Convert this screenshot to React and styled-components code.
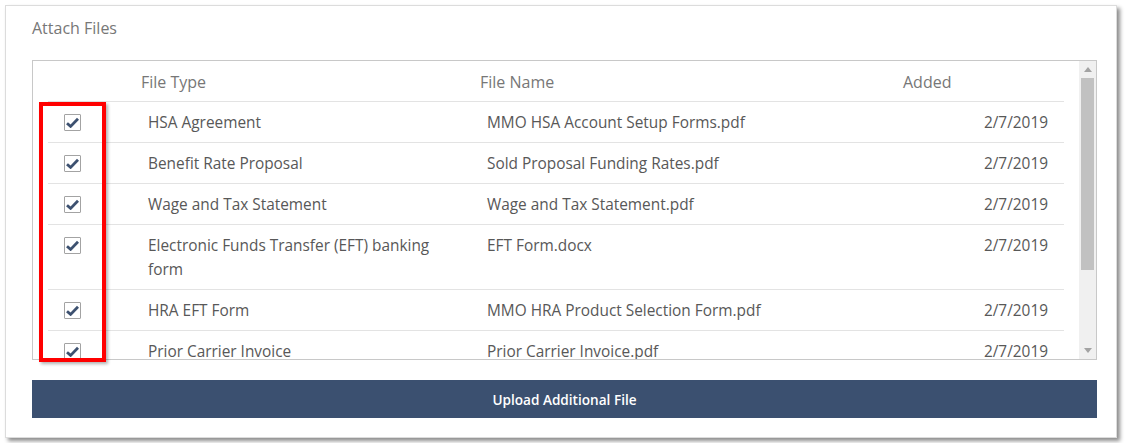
import React from "react";
import styled, { createGlobalStyle } from "styled-components";

const GlobalStyle = createGlobalStyle`
  html, body {
    margin: 0;
    padding: 0;
    background: #fff;
  }
  body {
    font-family: "Open Sans", "Liberation Sans", Arial, sans-serif;
  }
  * {
    box-sizing: border-box;
  }
`;

const Page = styled.div`
  padding: 5px;
`;

const Card = styled.div`
  width: 1112px;
  height: 433px;
  background: #fff;
  border: 1px solid #dcdcdc;
  box-shadow: 3px 3px 4px rgba(0, 0, 0, 0.45);
  padding: 10px 19px 19px 26px;
  display: flex;
  flex-direction: column;
`;

const Title = styled.div`
  font-size: 16px;
  line-height: 24px;
  color: #777;
  margin-bottom: 20px;
`;

const TableBox = styled.div`
  position: relative;
  height: 300px;
  border: 1px solid #c8c8c8;
  display: flex;
`;

const TableInner = styled.div`
  flex: 1;
  overflow: hidden;
  padding: 0 15px;
`;

const Row = styled.div`
  display: grid;
  grid-template-columns: 93px 339px 423px 161px;
  border-bottom: 1px solid #e3e3e3;
  font-size: ${(p) => (p.$head ? "16px" : "15.4px")};
  line-height: 24px;
  color: ${(p) => (p.$head ? "#777" : "#585858")};
`;

const Cell = styled.div`
  padding: ${(p) => (p.$head ? "9px" : "9px")}
    ${(p) => (p.$right ? "16px" : "30px")} ${(p) => (p.$head ? "7px" : "7px")}
    ${(p) => (p.$head ? "0" : "7px")};
  text-align: ${(p) => (p.$right ? "right" : "left")};
`;

const CheckCell = styled.div`
  padding: 12px 0 0 16px;
`;

const CheckBox = styled.div`
  width: 17px;
  height: 17px;
  border: 1px solid #a3a3a3;
  border-radius: 1px;
  background: #fff;
  display: flex;
  align-items: center;
  justify-content: center;
`;

const Scrollbar = styled.div`
  width: 17px;
  background: #f0f0f0;
  display: flex;
  flex-direction: column;
`;

const ArrowBtn = styled.div`
  height: 17px;
  display: flex;
  align-items: center;
  justify-content: center;
`;

const Track = styled.div`
  flex: 1;
  padding: 0 2px;
`;

const Thumb = styled.div`
  height: 192px;
  background: #c1c1c1;
`;

const Highlight = styled.div`
  position: absolute;
  left: 6px;
  top: 41px;
  width: 67px;
  height: 260px;
  border: 4px solid #f00;
  box-shadow: 2px 2px 3px rgba(0, 0, 0, 0.3);
  pointer-events: none;
`;

const UploadButton = styled.button`
  margin-top: 20px;
  height: 38px;
  width: 100%;
  border: none;
  background: #3b5070;
  color: #fff;
  font-family: "Open Sans", "Liberation Sans", Arial, sans-serif;
  font-size: 13.6px;
  font-weight: 600;
  cursor: pointer;
`;

const files = [
  { type: "HSA Agreement", name: "MMO HSA Account Setup Forms.pdf", added: "2/7/2019" },
  { type: "Benefit Rate Proposal", name: "Sold Proposal Funding Rates.pdf", added: "2/7/2019" },
  { type: "Wage and Tax Statement", name: "Wage and Tax Statement.pdf", added: "2/7/2019" },
  { type: "Electronic Funds Transfer (EFT) banking form", name: "EFT Form.docx", added: "2/7/2019" },
  { type: "HRA EFT Form", name: "MMO HRA Product Selection Form.pdf", added: "2/7/2019" },
  { type: "Prior Carrier Invoice", name: "Prior Carrier Invoice.pdf", added: "2/7/2019" },
];

const CheckIcon = () => (
  <svg width="13" height="11" viewBox="0 0 13 11">
    <path d="M1 6.2 L4.6 9.4 L12 1.8" fill="none" stroke="#3d5170" strokeWidth="2.8" />
  </svg>
);

const Triangle = ({ down }) => (
  <svg width="8" height="5" viewBox="0 0 8 5">
    <path d={down ? "M0 0 H8 L4 5 Z" : "M0 5 H8 L4 0 Z"} fill="#a3a3a3" />
  </svg>
);

export default function App() {
  return (
    <>
      <GlobalStyle />
      <Page>
        <Card>
          <Title>Attach Files</Title>
          <TableBox>
            <TableInner>
              <Row $head>
                <Cell $head />
                <Cell $head>File Type</Cell>
                <Cell $head>File Name</Cell>
                <Cell $head>Added</Cell>
              </Row>
              {files.map((f) => (
                <Row key={f.name}>
                  <CheckCell>
                    <CheckBox>
                      <CheckIcon />
                    </CheckBox>
                  </CheckCell>
                  <Cell>{f.type}</Cell>
                  <Cell>{f.name}</Cell>
                  <Cell $right>{f.added}</Cell>
                </Row>
              ))}
            </TableInner>
            <Scrollbar>
              <ArrowBtn>
                <Triangle />
              </ArrowBtn>
              <Track>
                <Thumb />
              </Track>
              <ArrowBtn>
                <Triangle down />
              </ArrowBtn>
            </Scrollbar>
            <Highlight />
          </TableBox>
          <UploadButton>Upload Additional File</UploadButton>
        </Card>
      </Page>
    </>
  );
}
